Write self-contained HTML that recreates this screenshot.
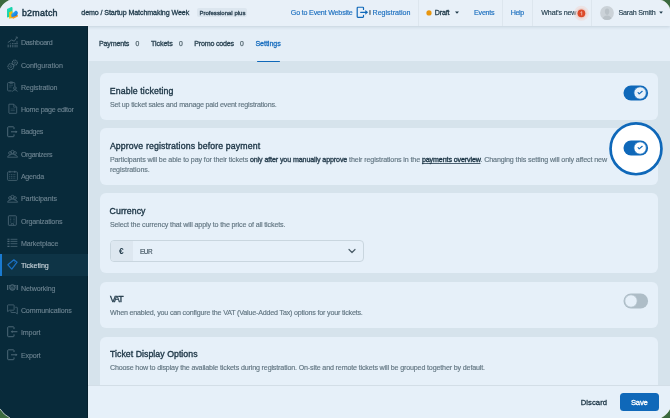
<!DOCTYPE html>
<html><head><meta charset="utf-8"><style>
html,body{margin:0;padding:0;}
body{width:670px;height:418px;overflow:hidden;background:#3a6a3c;position:relative;font-family:"Liberation Sans",sans-serif;}
#frame{position:absolute;left:0;top:0;width:670px;height:418px;overflow:hidden;will-change:transform;}
.t{position:absolute;white-space:nowrap;line-height:1;}
</style></head><body><div id="frame">
<div style="position:absolute;left:0px;top:0px;width:670px;height:418px;background:#d6e3ec"></div>
<div style="position:absolute;left:0px;top:0px;width:670px;height:25.5px;background:#e8f0f8;box-shadow:0 1px 3px rgba(40,70,90,.16);z-index:2"></div>
<div style="position:absolute;left:0px;top:25.5px;width:87.6px;height:392.5px;background:#082a3a;z-index:1"></div>
<div style="position:absolute;left:86.8px;top:25.5px;width:0.8px;height:392.5px;background:#06212e;z-index:1"></div>
<div style="position:absolute;left:0px;top:25px;width:88px;height:1px;background:#f3f7fb;z-index:3"></div>
<div style="position:absolute;left:87.6px;top:25.5px;width:0.8px;height:392.5px;background:#e3edf5;z-index:1"></div>
<div style="position:absolute;left:88.4px;top:25.5px;width:581.6px;height:35.5px;background:#e4eef7"></div>
<div style="position:absolute;left:100px;top:73.0px;width:558px;height:46.7px;background:#e6f0f9;border-radius:6px"></div>
<div style="position:absolute;left:100px;top:128.0px;width:558px;height:56.7px;background:#e6f0f9;border-radius:6px"></div>
<div style="position:absolute;left:100px;top:193.3px;width:558px;height:79.6px;background:#e6f0f9;border-radius:6px"></div>
<div style="position:absolute;left:100px;top:281.8px;width:558px;height:46.2px;background:#e6f0f9;border-radius:6px"></div>
<div style="position:absolute;left:100px;top:336.6px;width:558px;height:83.4px;background:#e6f0f9;border-radius:6px"></div>
<div style="position:absolute;left:88.4px;top:385.2px;width:581.6px;height:32.8px;background:#e6f0f9;border-top:0.8px solid #d3dee7;z-index:3"></div>
<svg style="position:absolute;left:0px;top:0px;z-index:4" width="24" height="24" viewBox="0 0 24 24"><defs><linearGradient id="lg1" x1="0" y1="0" x2="1" y2="1"><stop offset="0" stop-color="#22e3bd"/><stop offset="1" stop-color="#10c39a"/></linearGradient>
<linearGradient id="lg2" x1="0" y1="0" x2="1" y2="1"><stop offset="0" stop-color="#2cc0f8"/><stop offset="0.55" stop-color="#1d8fe8"/><stop offset="1" stop-color="#1458c4"/></linearGradient></defs>
<path d="M7.0 8.9 L11.3 7.0 Q12.5 6.6 12.5 7.9 L12.5 16.2 L7.0 17.4 Z" fill="url(#lg1)"/>
<path d="M9.1 12.3 L12.2 11.1 L12.2 18.0 L9.1 18.7 Z" fill="#f1c40e"/>
<path d="M11.2 12.4 L12.2 12.0 L12.2 18.0 L11.2 18.3 Z" fill="#f5a31a"/>
<path d="M11.5 15.9 L16.4 13.9 L17.9 15.1 L17.9 16.4 L13.3 18.8 L11.5 17.7 Z" fill="#f59c1f"/>
<path d="M11.3 14.2 L15.2 10.9 Q16.0 10.3 16.8 11.0 L17.6 12.1 Q18.0 12.8 17.7 13.6 L17.1 15.1 Q16.7 15.8 15.9 16.1 L12.6 16.9 Q11.5 17.1 11.3 16.0 Z" fill="url(#lg2)"/></svg>
<div class="t" style="left:21.90px;top:9.00px;font-size:8.9px;font-weight:400;color:#1b3646;z-index:4;letter-spacing:0.267px;-webkit-text-stroke-width:0.45px;">b2match</div>
<div class="t" style="left:81.30px;top:10.00px;font-size:7.11px;font-weight:400;color:#1f3a4a;z-index:4;letter-spacing:-0.100px;-webkit-text-stroke-width:0.3px;">demo / Startup Matchmaking Week</div>
<div style="position:absolute;left:197.2px;top:8.1px;width:50.1px;height:9.0px;background:#dce6ef;border-radius:2px;z-index:4"></div>
<div class="t" style="left:199.40px;top:10.00px;font-size:6.0px;font-weight:400;color:#2b4252;z-index:5;letter-spacing:0.025px;-webkit-text-stroke-width:0.3px;">Professional plus</div>
<div class="t" style="left:290.80px;top:10.00px;font-size:7.11px;font-weight:400;color:#1b6fbf;z-index:4;letter-spacing:-0.178px;-webkit-text-stroke-width:0.15px;">Go to Event Website</div>
<svg style="position:absolute;left:352.0px;top:4.0px;z-index:4" width="22" height="17" viewBox="0 0 22 17"><path d="M11.5 5.4 V3.9 Q11.5 3.25 10.85 3.25 H5.85 Q5.2 3.25 5.2 3.9 V12.6 Q5.2 13.3 5.85 13.3 H10.85 Q11.5 13.3 11.5 12.6 V11.4" fill="none" stroke="#0f68b9" stroke-width="1.2" stroke-linecap="round"/>
<path d="M8.7 8.35 H13.9" stroke="#0f68b9" stroke-width="1.3" stroke-linecap="round"/><path d="M13.3 6.1 L16.1 8.35 L13.3 10.7 Z" fill="#0f68b9"/>
<rect x="17.1" y="6.1" width="1.7" height="4.7" fill="#75868f"/></svg>
<div class="t" style="left:372.50px;top:10.00px;font-size:7.11px;font-weight:400;color:#1b6fbf;z-index:4;-webkit-text-stroke-width:0.15px;">Registration</div>
<div style="position:absolute;left:418px;top:0px;width:1px;height:25.5px;background:#dde6ee;z-index:4"></div>
<div style="position:absolute;left:502px;top:0px;width:1px;height:25.5px;background:#dde6ee;z-index:4"></div>
<div style="position:absolute;left:532px;top:0px;width:1px;height:25.5px;background:#dde6ee;z-index:4"></div>
<div style="position:absolute;left:591px;top:0px;width:1px;height:25.5px;background:#dde6ee;z-index:4"></div>
<svg style="position:absolute;left:424px;top:8px;z-index:4" width="10" height="10" viewBox="0 0 10 10"><circle cx="5" cy="4.9" r="2.6" fill="#e8960f"/></svg>
<div class="t" style="left:434.70px;top:10.00px;font-size:7.11px;font-weight:400;color:#1f3a4a;z-index:4;letter-spacing:-0.150px;-webkit-text-stroke-width:0.3px;">Draft</div>
<svg style="position:absolute;left:454px;top:10px;z-index:4" width="6" height="5" viewBox="0 0 6 5"><path d="M1 1.6 L5 1.6 L3 3.7 Z" fill="#1f3a4a"/></svg>
<div class="t" style="left:474.10px;top:10.00px;font-size:7.11px;font-weight:400;color:#1b6fbf;z-index:4;letter-spacing:-0.240px;-webkit-text-stroke-width:0.15px;">Events</div>
<div class="t" style="left:510.70px;top:10.00px;font-size:7.11px;font-weight:400;color:#1b6fbf;z-index:4;letter-spacing:-0.333px;-webkit-text-stroke-width:0.15px;">Help</div>
<div class="t" style="left:541.30px;top:10.00px;font-size:7.11px;font-weight:400;color:#1f3a4a;z-index:4;letter-spacing:-0.156px;-webkit-text-stroke-width:0.15px;">What's new</div>
<svg style="position:absolute;left:572px;top:4px;z-index:4" width="19" height="19" viewBox="0 0 19 19"><circle cx="9.4" cy="9.3" r="7.5" fill="#f2d3cc" opacity="0.45"/><circle cx="9.4" cy="9.3" r="5.4" fill="#efc2b8" opacity="0.5"/><circle cx="9.4" cy="9.3" r="3.9" fill="#dc4a2a"/><path d="M8.8 8.3 L9.7 7.7 V11" fill="none" stroke="#ffffff" stroke-width="0.9" stroke-linecap="round" stroke-linejoin="round" opacity="0.6"/></svg>
<svg style="position:absolute;left:600px;top:5.8px;z-index:4" width="14" height="14" viewBox="0 0 14 14"><circle cx="7" cy="7" r="6.9" fill="#cbd2d8"/><path d="M4.9 5.6 Q4.9 2.6 7.1 2.6 Q9.3 2.6 9.3 5.6 Q9.3 8.6 7.1 8.9 Q4.9 8.6 4.9 5.6Z" fill="#bac2c8"/><path d="M2.6 12.4 Q4 9.4 7.1 9.4 Q10.2 9.4 11.6 12.4 Q9.5 14 7.1 14 Q4.7 14 2.6 12.4Z" fill="#bac2c8"/></svg>
<div class="t" style="left:618.50px;top:10.00px;font-size:7.11px;font-weight:400;color:#1f3a4a;z-index:4;letter-spacing:-0.190px;-webkit-text-stroke-width:0.15px;">Sarah Smith</div>
<svg style="position:absolute;left:658px;top:10px;z-index:4" width="6" height="5" viewBox="0 0 6 5"><path d="M1.2 1.6 L4.9 1.6 L3.05 3.7 Z" fill="#1f3a4a"/></svg>
<div class="t" style="left:99.00px;top:41.00px;font-size:7.11px;font-weight:400;color:#2a4352;z-index:3;letter-spacing:-0.171px;-webkit-text-stroke-width:0.3px;">Payments</div>
<div class="t" style="left:135.50px;top:41.00px;font-size:6.8px;font-weight:400;color:#53666f;z-index:3;-webkit-text-stroke-width:0.25px;">0</div>
<div class="t" style="left:150.90px;top:41.00px;font-size:7.11px;font-weight:400;color:#2a4352;z-index:3;letter-spacing:-0.050px;-webkit-text-stroke-width:0.3px;">Tickets</div>
<div class="t" style="left:179.10px;top:41.00px;font-size:6.8px;font-weight:400;color:#53666f;z-index:3;-webkit-text-stroke-width:0.25px;">0</div>
<div class="t" style="left:194.30px;top:41.00px;font-size:7.11px;font-weight:400;color:#2a4352;z-index:3;letter-spacing:-0.220px;-webkit-text-stroke-width:0.3px;">Promo codes</div>
<div class="t" style="left:239.90px;top:41.00px;font-size:6.8px;font-weight:400;color:#53666f;z-index:3;-webkit-text-stroke-width:0.25px;">0</div>
<div class="t" style="left:255.40px;top:41.00px;font-size:7.11px;font-weight:400;color:#1b6fbf;z-index:3;letter-spacing:-0.043px;-webkit-text-stroke-width:0.3px;">Settings</div>
<div style="position:absolute;left:256.8px;top:60.9px;width:23.2px;height:1.3px;background:#0f68b9;border-radius:1px;z-index:2"></div>
<div style="position:absolute;left:0px;top:253.8px;width:87.6px;height:22.7px;background:#0e3446;z-index:2"></div>
<div style="position:absolute;left:0px;top:253.8px;width:1.6px;height:22.7px;background:#1a7ad0;z-index:2"></div>
<svg style="position:absolute;left:6.5px;top:36.4px;z-index:3" width="12" height="12" viewBox="0 0 12 12"><path d="M1.2 11.2 V8.2 M3.5 11.2 V7.4 M5.8 11.2 V6.6 M8.1 11.2 V6.4 M10.0 11.2 V5.0" stroke="#4d6877" stroke-width="1.3" stroke-dasharray="1.0 0.55"/><path d="M0.8 6.6 L4.6 4.0 L7.3 5.2 L10.0 1.2" fill="none" stroke="#4d6877" stroke-width="0.85" stroke-linejoin="round"/><path d="M8.7 1.0 H10.3 V2.6" fill="none" stroke="#4d6877" stroke-width="0.7"/></svg>
<div class="t" style="left:20.90px;top:40.00px;font-size:7.11px;font-weight:400;color:#6c8390;z-index:3;letter-spacing:-0.362px;-webkit-text-stroke-width:0.12px;">Dashboard</div>
<svg style="position:absolute;left:6.5px;top:58.7px;z-index:3" width="12" height="12" viewBox="0 0 12 12"><circle cx="3.8" cy="7.6" r="2.9" fill="none" stroke="#4d6877" stroke-width="1.1" stroke-dasharray="1.1 0.55"/><circle cx="7.8" cy="3.6" r="2.5" fill="none" stroke="#4d6877" stroke-width="1.1" stroke-dasharray="1.1 0.55"/><circle cx="3.8" cy="7.6" r="1.0" fill="none" stroke="#4d6877" stroke-width="0.6"/><circle cx="7.8" cy="3.6" r="0.8" fill="none" stroke="#4d6877" stroke-width="0.6"/></svg>
<div class="t" style="left:20.90px;top:63.00px;font-size:7.11px;font-weight:400;color:#6c8390;z-index:3;letter-spacing:-0.025px;-webkit-text-stroke-width:0.12px;">Configuration</div>
<svg style="position:absolute;left:6.5px;top:81.0px;z-index:3" width="12" height="12" viewBox="0 0 12 12"><path d="M7.8 5.2 V2.4 Q7.8 1.6 7.0 1.6 H1.4 Q0.6 1.6 0.6 2.4 V9.1 Q0.6 9.9 1.4 9.9 H4.6" fill="none" stroke="#4d6877" stroke-width="0.8"/><rect x="2.6" y="0.9" width="3.2" height="1.4" rx="0.4" fill="none" stroke="#4d6877" stroke-width="0.7"/><path d="M2.2 4.2 H6.0 M2.2 6.0 H4.6" stroke="#4d6877" stroke-width="0.5"/><circle cx="7.9" cy="7.0" r="1.3" fill="none" stroke="#4d6877" stroke-width="0.8"/><path d="M5.5 10.6 Q5.9 8.8 7.9 8.8 Q9.9 8.8 10.3 10.6" fill="none" stroke="#4d6877" stroke-width="0.8"/></svg>
<div class="t" style="left:20.90px;top:85.00px;font-size:7.11px;font-weight:400;color:#6c8390;z-index:3;letter-spacing:-0.127px;-webkit-text-stroke-width:0.12px;">Registration</div>
<svg style="position:absolute;left:6.5px;top:103.3px;z-index:3" width="12" height="12" viewBox="0 0 12 12"><path d="M1.9 1.2 H6.7 L9.7 4.2 V9.9 Q9.7 10.3 9.3 10.3 H2.3 Q1.9 10.3 1.9 9.9 Z" fill="none" stroke="#4d6877" stroke-width="0.8" stroke-linejoin="round"/><path d="M6.7 1.2 V4.2 H9.7" fill="none" stroke="#4d6877" stroke-width="0.6"/><path d="M3.6 6.0 H7.8 M3.6 7.6 H7.8" stroke="#4d6877" stroke-width="0.45"/></svg>
<div class="t" style="left:20.90px;top:107.00px;font-size:7.11px;font-weight:400;color:#6c8390;z-index:3;letter-spacing:-0.240px;-webkit-text-stroke-width:0.12px;">Home page editor</div>
<svg style="position:absolute;left:6.5px;top:125.6px;z-index:3" width="12" height="12" viewBox="0 0 12 12"><path d="M7.0 3.1 V1.5 Q7.0 0.8 6.3 0.8 H1.4 Q0.7 0.8 0.7 1.5 V10.0 Q0.7 10.7 1.4 10.7 H6.3 Q7.0 10.7 7.0 10.0 V8.4" fill="none" stroke="#4d6877" stroke-width="1.0"/><path d="M4.0 5.8 H9.4" stroke="#4d6877" stroke-width="1.05"/><path d="M8.6 4.4 L10.5 5.8 L8.6 7.2Z" fill="#4d6877"/></svg>
<div class="t" style="left:20.90px;top:129.00px;font-size:7.11px;font-weight:400;color:#6c8390;z-index:3;letter-spacing:-0.340px;-webkit-text-stroke-width:0.12px;">Badges</div>
<svg style="position:absolute;left:6.5px;top:147.9px;z-index:3" width="12" height="12" viewBox="0 0 12 12"><circle cx="3.0" cy="5.0" r="1.4" fill="none" stroke="#4d6877" stroke-width="0.75"/><circle cx="8.0" cy="5.0" r="1.4" fill="none" stroke="#4d6877" stroke-width="0.75"/><circle cx="5.5" cy="3.9" r="1.6" fill="none" stroke="#4d6877" stroke-width="0.75"/><path d="M0.5 9.2 Q1.2 7.0 3.2 7.0 Q4.3 6.2 5.5 6.2 Q6.7 6.2 7.8 7.0 Q9.8 7.0 10.6 9.2 Z" fill="none" stroke="#4d6877" stroke-width="0.8" stroke-linejoin="round"/></svg>
<div class="t" style="left:20.90px;top:152.00px;font-size:7.11px;font-weight:400;color:#6c8390;z-index:3;letter-spacing:-0.356px;-webkit-text-stroke-width:0.12px;">Organizers</div>
<svg style="position:absolute;left:6.5px;top:170.2px;z-index:3" width="12" height="12" viewBox="0 0 12 12"><rect x="0.6" y="1.8" width="9.8" height="8.6" rx="0.9" fill="none" stroke="#4d6877" stroke-width="0.8"/><path d="M2.9 0.8 V2.8 M7.8 0.8 V2.8" stroke="#4d6877" stroke-width="0.9"/><path d="M2.2 4.6 H8.8 M2.2 6.4 H8.8 M2.2 8.2 H8.8" stroke="#4d6877" stroke-width="0.7" stroke-dasharray="1 0.7"/></svg>
<div class="t" style="left:20.90px;top:174.00px;font-size:7.11px;font-weight:400;color:#6c8390;z-index:3;letter-spacing:-0.260px;-webkit-text-stroke-width:0.12px;">Agenda</div>
<svg style="position:absolute;left:6.5px;top:192.5px;z-index:3" width="12" height="12" viewBox="0 0 12 12"><circle cx="3.0" cy="5.0" r="1.4" fill="none" stroke="#4d6877" stroke-width="0.75"/><circle cx="8.0" cy="5.0" r="1.4" fill="none" stroke="#4d6877" stroke-width="0.75"/><circle cx="5.5" cy="3.9" r="1.6" fill="none" stroke="#4d6877" stroke-width="0.75"/><path d="M0.5 9.2 Q1.2 7.0 3.2 7.0 Q4.3 6.2 5.5 6.2 Q6.7 6.2 7.8 7.0 Q9.8 7.0 10.6 9.2 Z" fill="none" stroke="#4d6877" stroke-width="0.8" stroke-linejoin="round"/></svg>
<div class="t" style="left:20.90px;top:196.00px;font-size:7.11px;font-weight:400;color:#6c8390;z-index:3;letter-spacing:-0.100px;-webkit-text-stroke-width:0.12px;">Participants</div>
<svg style="position:absolute;left:6.5px;top:214.8px;z-index:3" width="12" height="12" viewBox="0 0 12 12"><rect x="1.4" y="0.8" width="7.9" height="9.5" rx="0.6" fill="none" stroke="#4d6877" stroke-width="0.85"/><path d="M3.7 2.6 V7.6 M7.0 2.6 V7.6" stroke="#4d6877" stroke-width="0.7" stroke-dasharray="0.9 0.6"/><path d="M4.2 10.3 V8.6 H6.5 V10.3" fill="none" stroke="#4d6877" stroke-width="0.6"/></svg>
<div class="t" style="left:20.90px;top:219.00px;font-size:7.11px;font-weight:400;color:#6c8390;z-index:3;letter-spacing:-0.192px;-webkit-text-stroke-width:0.12px;">Organizations</div>
<svg style="position:absolute;left:6.5px;top:237.1px;z-index:3" width="12" height="12" viewBox="0 0 12 12"><path d="M0.4 2.3 H2.5 M0.4 4.4 H2.5 M0.4 6.7 H2.5 M0.4 9.4 H2.5" stroke="#4d6877" stroke-width="1.1"/><path d="M3.5 2.3 H10.4 M3.5 4.4 H10.4 M3.5 6.7 H10.4 M3.5 9.4 H10.4" stroke="#4d6877" stroke-width="0.8"/></svg>
<div class="t" style="left:20.90px;top:241.00px;font-size:7.11px;font-weight:400;color:#6c8390;z-index:3;letter-spacing:-0.110px;-webkit-text-stroke-width:0.12px;">Marketplace</div>
<svg style="position:absolute;left:6.5px;top:259.4px;z-index:3" width="12" height="12" viewBox="0 0 12 12"><path d="M0.9 5.8 L6.9 0.8 L10.1 3.2 L4.8 10.1 Z" fill="none" stroke="#1a6fc0" stroke-width="1.25" stroke-linejoin="round"/><circle cx="7.6" cy="3.0" r="0.55" fill="#1a6fc0"/></svg>
<div class="t" style="left:20.90px;top:263.00px;font-size:7.11px;font-weight:400;color:#cdd8df;z-index:3;letter-spacing:-0.038px;-webkit-text-stroke-width:0.12px;">Ticketing</div>
<svg style="position:absolute;left:6.5px;top:281.7px;z-index:3" width="12" height="12" viewBox="0 0 12 12"><path d="M0.5 3.0 V8.0 M10.3 3.0 V8.0" stroke="#4d6877" stroke-width="1.5"/><path d="M1.8 3.6 H3.2 M7.6 3.6 H9.0" stroke="#4d6877" stroke-width="0.8"/><circle cx="5.4" cy="5.5" r="2.8" fill="#4d6877" fill-opacity="0.55" stroke="#4d6877" stroke-width="1.0"/><path d="M3.6 5.0 L5.1 3.8 L7.3 5.9" fill="none" stroke="#082a3a" stroke-width="0.7"/></svg>
<div class="t" style="left:20.90px;top:286.00px;font-size:7.11px;font-weight:400;color:#6c8390;z-index:3;letter-spacing:-0.100px;-webkit-text-stroke-width:0.12px;">Networking</div>
<svg style="position:absolute;left:6.5px;top:304.0px;z-index:3" width="12" height="12" viewBox="0 0 12 12"><path d="M0.6 1.4 Q0.6 0.9 1.1 0.9 H6.6 Q7.1 0.9 7.1 1.4 V5.7 Q7.1 6.2 6.6 6.2 H2.6 L0.6 7.6 Z" fill="none" stroke="#4d6877" stroke-width="0.8" stroke-linejoin="round"/><path d="M8.3 3.3 H9.8 Q10.3 3.3 10.3 3.8 V9.9 L8.4 8.5 H4.4 Q3.9 8.5 3.9 8.0 V7.2" fill="none" stroke="#4d6877" stroke-width="0.8" stroke-linejoin="round"/></svg>
<div class="t" style="left:20.90px;top:308.00px;font-size:7.11px;font-weight:400;color:#6c8390;z-index:3;letter-spacing:-0.154px;-webkit-text-stroke-width:0.12px;">Communications</div>
<svg style="position:absolute;left:6.5px;top:326.3px;z-index:3" width="12" height="12" viewBox="0 0 12 12"><path d="M7.0 3.1 V1.5 Q7.0 0.8 6.3 0.8 H1.4 Q0.7 0.8 0.7 1.5 V10.0 Q0.7 10.7 1.4 10.7 H6.3 Q7.0 10.7 7.0 10.0 V8.4" fill="none" stroke="#4d6877" stroke-width="1.0"/><path d="M5.2 5.7 H10.4" stroke="#4d6877" stroke-width="1.05"/><path d="M5.6 4.3 L3.7 5.7 L5.6 7.1Z" fill="#4d6877"/></svg>
<div class="t" style="left:20.90px;top:330.00px;font-size:7.11px;font-weight:400;color:#6c8390;z-index:3;letter-spacing:-0.120px;-webkit-text-stroke-width:0.12px;">Import</div>
<svg style="position:absolute;left:6.5px;top:348.6px;z-index:3" width="12" height="12" viewBox="0 0 12 12"><path d="M7.0 3.1 V1.5 Q7.0 0.8 6.3 0.8 H1.4 Q0.7 0.8 0.7 1.5 V10.0 Q0.7 10.7 1.4 10.7 H6.3 Q7.0 10.7 7.0 10.0 V8.4" fill="none" stroke="#4d6877" stroke-width="1.0"/><path d="M4.0 5.8 H9.4" stroke="#4d6877" stroke-width="1.05"/><path d="M8.6 4.4 L10.5 5.8 L8.6 7.2Z" fill="#4d6877"/></svg>
<div class="t" style="left:20.90px;top:353.00px;font-size:7.11px;font-weight:400;color:#6c8390;z-index:3;letter-spacing:-0.140px;-webkit-text-stroke-width:0.12px;">Export</div>
<div class="t" style="left:109.70px;top:87.00px;font-size:8.75px;font-weight:400;color:#1d3646;z-index:3;letter-spacing:0.127px;-webkit-text-stroke-width:0.35px;">Enable ticketing</div>
<div class="t" style="left:109.90px;top:102.00px;font-size:7.11px;font-weight:400;color:#627682;z-index:3;letter-spacing:-0.178px;-webkit-text-stroke-width:0.15px;">Set up ticket sales and manage paid event registrations.</div>
<svg style="position:absolute;left:622.9px;top:85.3px;z-index:2" width="26" height="16" viewBox="0 0 26 16"><rect x="0.5" y="0.5" width="24.6" height="15" rx="7.5" fill="#0f68b9"/><circle cx="17.1" cy="8" r="6.2" fill="#e6f0f9" stroke="#0f68b9" stroke-width="0.75"/><path d="M15.1 7.5 L16.2 8.9 L19.2 6.3" fill="none" stroke="#0f68b9" stroke-width="1.15" stroke-linecap="round" stroke-linejoin="round"/></svg>
<div class="t" style="left:109.90px;top:142.00px;font-size:8.75px;font-weight:400;color:#1d3646;z-index:3;letter-spacing:0.123px;-webkit-text-stroke-width:0.35px;">Approve registrations before payment</div>
<div class="t" style="left:109.90px;top:157.00px;font-size:7.11px;font-weight:400;color:#627682;z-index:3;letter-spacing:-0.113px;-webkit-text-stroke-width:0.15px;">Participants will be able to pay for their tickets <span style="color:#2b4252;-webkit-text-stroke-width:0.35px">only after you manually approve</span> their registrations in the <span style="color:#1d3646;-webkit-text-stroke-width:0.35px;text-decoration:underline;text-decoration-color:#4d6272;text-decoration-thickness:0.6px;text-underline-offset:0.8px">payments overview</span>. Changing this setting will only affect new</div>
<div class="t" style="left:109.90px;top:167.00px;font-size:7.11px;font-weight:400;color:#627682;z-index:3;letter-spacing:-0.062px;-webkit-text-stroke-width:0.15px;">registrations.</div>
<svg style="position:absolute;left:608px;top:121px;z-index:2" width="56" height="56" viewBox="0 0 56 56"><circle cx="28" cy="27.8" r="25.45" fill="#ffffff" stroke="#0f68b9" stroke-width="2.7"/></svg>
<svg style="position:absolute;left:623.0px;top:140.1px;z-index:2" width="26" height="16" viewBox="0 0 26 16"><rect x="0.5" y="0.5" width="24.6" height="15" rx="7.5" fill="#0f68b9"/><circle cx="17.1" cy="8" r="6.2" fill="#ffffff" stroke="#0f68b9" stroke-width="0.75"/><path d="M15.1 7.5 L16.2 8.9 L19.2 6.3" fill="none" stroke="#0f68b9" stroke-width="1.15" stroke-linecap="round" stroke-linejoin="round"/></svg>
<div class="t" style="left:109.60px;top:207.00px;font-size:8.75px;font-weight:400;color:#1d3646;z-index:3;letter-spacing:0.057px;-webkit-text-stroke-width:0.35px;">Currency</div>
<div class="t" style="left:109.90px;top:222.00px;font-size:7.11px;font-weight:400;color:#627682;z-index:3;letter-spacing:-0.130px;-webkit-text-stroke-width:0.15px;">Select the currency that will apply to the price of all tickets.</div>
<div style="position:absolute;left:110.2px;top:240.2px;width:253.5px;height:22.2px;box-sizing:border-box;border:0.9px solid #c9d6df;border-radius:4px;background:#e6f0f9;z-index:2"></div>
<div style="position:absolute;left:111.1px;top:241.1px;width:21.6px;height:20.4px;background:#dde7f0;border-radius:3px 0 0 3px;z-index:2"></div>
<div class="t" style="left:119.10px;top:247.00px;font-size:8.4px;font-weight:700;color:#1d3646;z-index:3;">€</div>
<div class="t" style="left:140.00px;top:249.00px;font-size:6.4px;font-weight:400;color:#4a5c68;z-index:3;letter-spacing:-0.500px;-webkit-text-stroke-width:0.2px;">EUR</div>
<svg style="position:absolute;left:347px;top:247px;z-index:3" width="10" height="8" viewBox="0 0 10 8"><path d="M2 2.5 L5 5.5 L8 2.5" fill="none" stroke="#4a5c68" stroke-width="1.2" stroke-linecap="round" stroke-linejoin="round"/></svg>
<div class="t" style="left:110.00px;top:295.00px;font-size:8.75px;font-weight:400;color:#1d3646;z-index:3;letter-spacing:-1.100px;-webkit-text-stroke-width:0.35px;">VAT</div>
<div class="t" style="left:109.90px;top:310.00px;font-size:7.11px;font-weight:400;color:#627682;z-index:3;letter-spacing:-0.180px;-webkit-text-stroke-width:0.15px;">When enabled, you can configure the VAT (Value-Added Tax) options for your tickets.</div>
<svg style="position:absolute;left:622.9px;top:293.3px;z-index:2" width="26" height="16" viewBox="0 0 26 16"><rect x="0.5" y="0.5" width="24.6" height="15" rx="7.5" fill="#aebdc7"/><circle cx="8.0" cy="8" r="6.2" fill="#e6f0f9" stroke="#aebdc7" stroke-width="0.75"/></svg>
<div class="t" style="left:110.00px;top:350.00px;font-size:8.75px;font-weight:400;color:#1d3646;z-index:3;letter-spacing:0.038px;-webkit-text-stroke-width:0.35px;">Ticket Display Options</div>
<div class="t" style="left:109.90px;top:365.00px;font-size:7.11px;font-weight:400;color:#627682;z-index:3;letter-spacing:-0.148px;-webkit-text-stroke-width:0.15px;">Choose how to display the available tickets during registration. On-site and remote tickets will be grouped together by default.</div>
<div class="t" style="left:580.70px;top:399.00px;font-size:7.66px;font-weight:400;color:#1d3646;z-index:4;letter-spacing:0.067px;-webkit-text-stroke-width:0.3px;">Discard</div>
<div style="position:absolute;left:619.7px;top:392.7px;width:39.4px;height:18.4px;background:#0f68b9;border-radius:3.5px;z-index:4"></div>
<div class="t" style="left:630.90px;top:399.00px;font-size:7.66px;font-weight:400;color:#ffffff;z-index:5;letter-spacing:-0.167px;-webkit-text-stroke-width:0.3px;">Save</div>
<svg style="position:absolute;left:0px;top:0px;z-index:50" width="670" height="418" viewBox="0 0 670 418"><path d="M0 0 H9.6 Q3.0 3.0 0 9.0 Z" fill="#3b6a3e"/><path d="M9.6 0 Q3.0 3.0 0 9.0" fill="none" stroke="#f4f8f6" stroke-width="0.7" opacity="0.8"/><path d="M670 0 H660.8 Q667.6 2.0 670 9.0 Z" fill="#3b6a3e"/><path d="M660.8 0 Q667.6 2.0 670 9.0" fill="none" stroke="#f4f8f6" stroke-width="0.7" opacity="0.8"/><path d="M670 418 H660.8 Q666.8 415 670 409 Z" fill="#3b6a3e"/><path d="M660.8 418 Q666.8 415 670 409" fill="none" stroke="#f4f8f6" stroke-width="0.7" opacity="0.8"/><path d="M0 418 H10.0 Q3.4 414.6 0 408.8 Z" fill="#3b6a3e"/><path d="M10.0 418 Q3.4 414.6 0 408.8" fill="none" stroke="#f4f8f6" stroke-width="0.8" opacity="0.9"/></svg>
</div></body></html>
